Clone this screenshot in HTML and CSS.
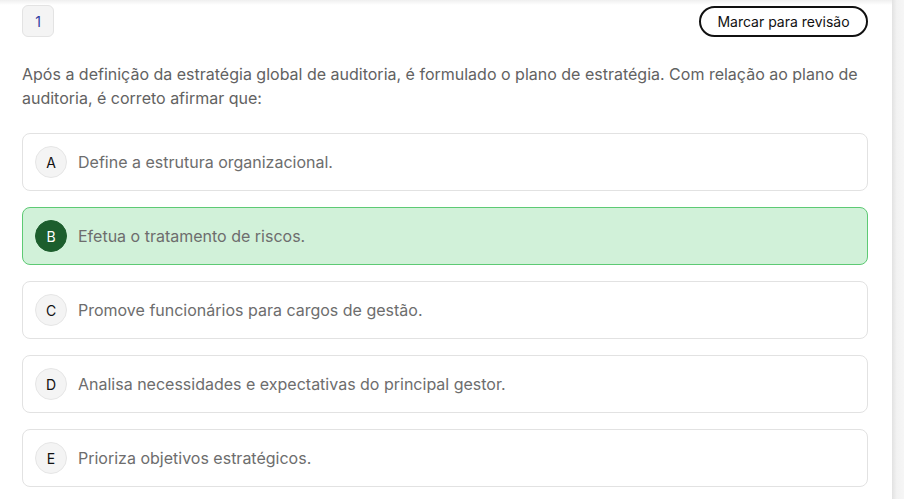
FILE: index.html
```html
<!DOCTYPE html>
<html lang="pt">
<head>
<meta charset="utf-8">
<link rel="stylesheet" href="styles.css">
</head>
<body>
<div class="page">
  <main class="content">
    <div class="topbar">
      <div class="qnum">1</div>
      <button class="review">Marcar para revisão</button>
    </div>
    <p class="question">Após a definição da estratégia global de auditoria, é formulado o plano de estratégia. Com relação ao plano de auditoria, é correto afirmar que:</p>
    <div class="options">
      <div class="option"><span class="letter">A</span><span class="text">Define a estrutura organizacional.</span></div>
      <div class="option selected"><span class="letter">B</span><span class="text">Efetua o tratamento de riscos.</span></div>
      <div class="option"><span class="letter">C</span><span class="text">Promove funcionários para cargos de gestão.</span></div>
      <div class="option"><span class="letter">D</span><span class="text">Analisa necessidades e expectativas do principal gestor.</span></div>
      <div class="option"><span class="letter">E</span><span class="text">Prioriza objetivos estratégicos.</span></div>
    </div>
  </main>
  <aside class="side"></aside>
</div>
</body>
</html>
```
FILE: styles.css
```css
* { box-sizing: border-box; }
html, body { margin: 0; padding: 0; }
body {
  font-family: Inter, "Noto Sans", sans-serif;
  background: #fff;
  width: 904px;
  height: 499px;
  overflow: hidden;
}
.page {
  display: flex;
  height: 499px;
  background: linear-gradient(#efefef, #fff 5px);
}
.content {
  width: 892px;
  padding: 5px 24px 0 22px;
}
.side {
  flex: 1;
  background: linear-gradient(90deg, #e2e2e2, #f2f2f2 40%, #f6f6f6);
}
.topbar {
  display: flex;
  justify-content: space-between;
  align-items: flex-start;
}
.qnum {
  width: 32px;
  height: 32px;
  border: 1px solid #e3e3e3;
  border-radius: 6px;
  background: #f4f4f4;
  color: #2f3a9e;
  font-size: 14px;
  display: flex;
  align-items: center;
  justify-content: center;
}
.review {
  margin-top: 1px;
  height: 31px;
  width: 169px;
  border: 2px solid #111;
  border-radius: 16px;
  background: #fff;
  font-family: inherit;
  font-size: 14px;
  color: #111;
  padding: 0;
}
.question {
  margin: 25px 0 0;
  font-size: 16px;
  line-height: 24px;
  color: #626262;
}
.options {
  margin-top: 23px;
  display: flex;
  flex-direction: column;
  gap: 16px;
}
.option {
  height: 58px;
  border: 1px solid #e2e2e2;
  border-radius: 8px;
  display: flex;
  align-items: center;
  padding-left: 12px;
  background: #fff;
}
.letter {
  width: 32px;
  height: 32px;
  border-radius: 50%;
  border: 1px solid #e6e6e6;
  background: #f4f4f4;
  color: #111;
  font-size: 14px;
  display: flex;
  align-items: center;
  justify-content: center;
  flex: none;
}
.text {
  margin-left: 11px;
  font-size: 16px;
  color: #6d6d6d;
}
.option.selected {
  background: #d1f1d9;
  border-color: #5dca74;
}
.option.selected .letter {
  background: #1c5e2d;
  border-color: #1c5e2d;
  color: #fff;
}
```
